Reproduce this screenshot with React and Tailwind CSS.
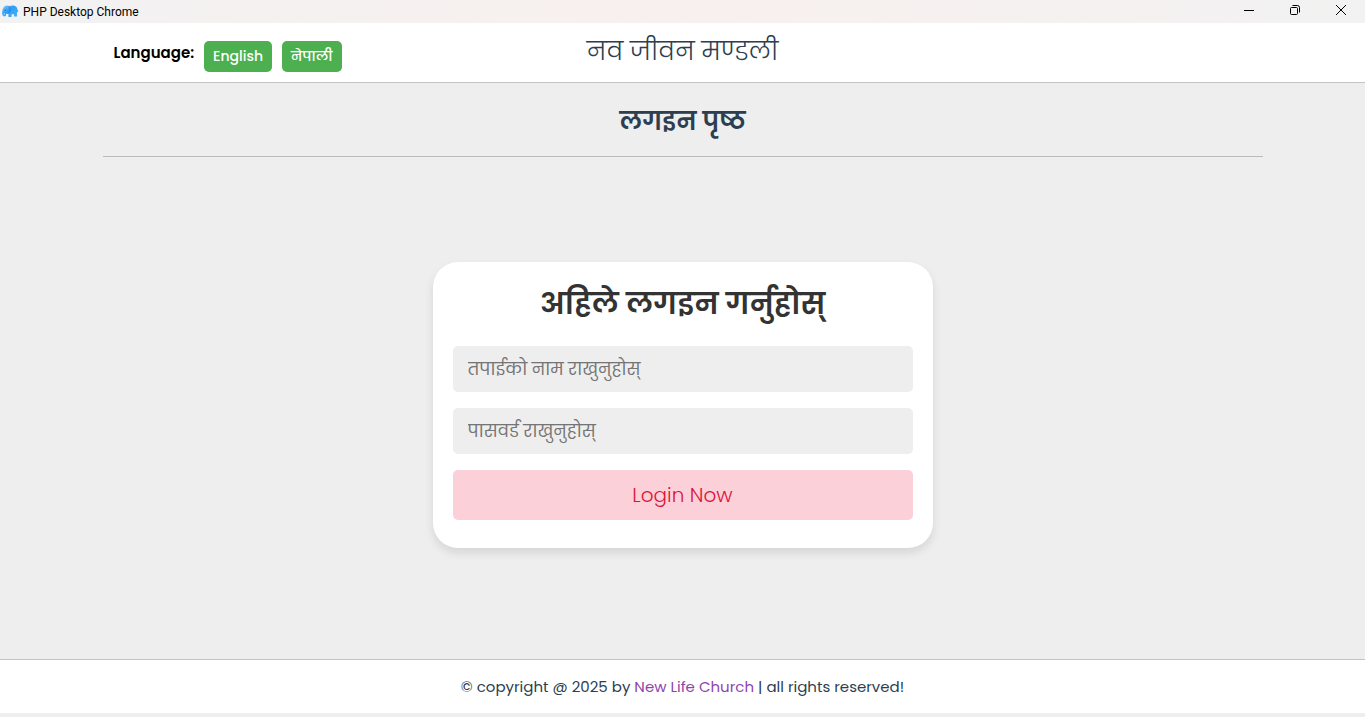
import React from "react";

function ElephantIcon() {
  return (
    <svg width="18" height="16" viewBox="0 0 18 16" aria-hidden="true">
      <defs>
        <linearGradient id="hide" x1="0" y1="0" x2="1" y2="1">
          <stop offset="0" stopColor="#8accfb" />
          <stop offset="0.4" stopColor="#2f9df5" />
          <stop offset="1" stopColor="#4fb0f7" />
        </linearGradient>
      </defs>
      <path
        d="M2.6 2.2C4 1.2 6 1.3 7.2 2C9.5 1 12.5 1.2 14 2.6C15 3.6 15.2 4.6 15.5 5.6L16.4 7.4L15 8.2V12.6H12V10.2H9.6V13H6.4V10C5.6 10.2 5 10 4.4 9.4L3.9 11.6C3.5 12.8 1.2 12.6 0.6 11.2C0.1 9.8 0.1 7.8 0.5 6C0.8 4.4 1.4 3.2 2.6 2.2Z"
        fill="url(#hide)"
      />
      <path d="M7.2 2.6C8.4 4.2 8.2 7.4 6.6 9" stroke="#1679dc" strokeWidth="0.8" fill="none" />
      <path d="M1.8 11.2L2.6 9" stroke="#b9e0fc" strokeWidth="0.8" />
      <circle cx="3.2" cy="6" r="0.6" fill="#0d4f9e" />
    </svg>
  );
}

function TitleBar() {
  return (
    <div className="flex h-[23px] items-center justify-between bg-linear-to-r from-[#f2f2f2] via-[#f8f0ee] to-[#f2f2f2] pr-[18px] pl-[2px] font-['Roboto','Noto_Sans',sans-serif] text-xs text-black">
      <div className="flex items-center gap-[3px]">
        <ElephantIcon />
        <span>PHP Desktop Chrome</span>
      </div>
      <div className="flex gap-[34px] pb-[3px]">
        <button type="button" aria-label="Minimize">
          <svg width="12" height="12" viewBox="0 0 12 12" stroke="#000" fill="none">
            <path d="M1 6.5H11" />
          </svg>
        </button>
        <button type="button" aria-label="Restore">
          <svg width="12" height="12" viewBox="0 0 12 12" stroke="#000" fill="none">
            <rect x="1.5" y="3.5" width="7" height="7" rx="1" />
            <path d="M3.5 1.5H8.5Q10.5 1.5 10.5 3.5V8.5" />
          </svg>
        </button>
        <button type="button" aria-label="Close">
          <svg width="12" height="12" viewBox="0 0 12 12" stroke="#000" fill="none">
            <path d="M1 1L11 11M11 1L1 11" />
          </svg>
        </button>
      </div>
    </div>
  );
}

function LanguageButton({ children }) {
  return (
    <button
      type="button"
      className="h-[31px] rounded-[5px] bg-[#4caf50] px-[9px] pb-px text-sm font-medium text-white"
    >
      {children}
    </button>
  );
}

function Header() {
  return (
    <header className="border-b border-[#c4c4c4] bg-white">
      <div className="mx-auto grid h-[59px] max-w-[1160px] grid-cols-[1fr_auto_1fr] items-start px-[11px]">
        <div className="flex gap-[10px] pt-[18px]">
          <span className="text-[15px] leading-6 font-semibold text-black">Language:</span>
          <LanguageButton>English</LanguageButton>
          <LanguageButton>नेपाली</LanguageButton>
        </div>
        <a href="#home" className="pt-[9px] text-[25px] leading-10 font-light text-[#2c3e50]">
          नव जीवन मण्डली
        </a>
        <span />
      </div>
    </header>
  );
}

function Field({ type, label }) {
  return (
    <input
      type={type}
      aria-label={label}
      placeholder={label}
      className="block h-[46px] w-full rounded-[5px] bg-[#eee] px-[15px] pb-px text-[17px] text-[#333] placeholder:text-[#757575]"
    />
  );
}

function LoginCard() {
  return (
    <form
      onSubmit={(event) => event.preventDefault()}
      className="w-full max-w-[500px] rounded-[25px] bg-white px-5 pt-[18px] pb-7 shadow-[0_5px_10px_rgba(0,0,0,0.1)]"
    >
      <h2 className="pb-[18px] text-center text-[30px] leading-12 font-semibold text-[#333]">
        अहिले लगइन गर्नुहोस्
      </h2>
      <div className="flex flex-col gap-4">
        <Field type="text" label="तपाईको नाम राखुनुहोस्" />
        <Field type="password" label="पासवर्ड राखुनुहोस्" />
        <button type="submit" className="h-[50px] rounded-[5px] bg-[#fbd0d9] text-xl font-light text-[#dc143c]">
          Login Now
        </button>
      </div>
    </form>
  );
}

export default function App() {
  return (
    <div className="flex min-h-screen flex-col bg-[#eee] pb-1 font-['Poppins','Open_Sans','Noto_Sans_Devanagari','Noto_Sans',sans-serif]">
      <TitleBar />
      <Header />
      <main className="mx-auto flex w-full max-w-[1160px] flex-1 flex-col">
        <h1 className="border-b border-[#bbb] pt-[19px] pb-[14px] text-center text-[25px] leading-10 font-semibold text-[#2c3e50]">
          लगइन पृष्ठ
        </h1>
        <div className="flex flex-1 items-center justify-center pb-[6px]">
          <LoginCard />
        </div>
      </main>
      <footer className="border-t border-[#c4c4c4] bg-white py-[15px] text-center text-[15px] leading-[23px] text-[#2c3e50]">
        © copyright @ 2025 by{" "}
        <a href="#church" className="text-[#8e44ad]">New Life Church</a> | all rights reserved!
      </footer>
    </div>
  );
}
